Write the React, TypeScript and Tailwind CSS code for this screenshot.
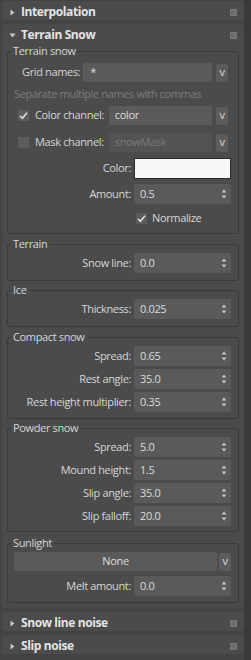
import React from 'react';

const Tri = ({ open }: { open?: boolean }) => (
  <svg width="7" height="7" viewBox="0 0 7 7" className="shrink-0">
    {open ? <path d="M0.5 1.5 L6.5 1.5 L3.5 5.5 Z" fill="#c8c8c8" /> : <path d="M1.5 0.5 L5.5 3.5 L1.5 6.5 Z" fill="#c8c8c8" />}
  </svg>
);

const PinBox = () => (
  <div className="w-[7px] h-[7px] bg-[#6c6c6c] border border-[#777777] shrink-0" />
);

function RolloutHeader({ title, open }: { title: string; open?: boolean }) {
  return (
    <div className="h-[20px] flex items-center pt-[2px] pl-[7px] pr-[7px]">
      <Tri open={open} />
      <span className="ml-[5px] text-[12px] font-bold tracking-[-0.4px] text-[#e4e4e4] leading-none">{title}</span>
      <div className="flex-1" />
      <PinBox />
    </div>
  );
}

const Spinner = () => (
  <svg width="6" height="10" viewBox="0 0 6 10" className="shrink-0">
    <path d="M3 0.5 L5.5 3.5 L0.5 3.5 Z" fill="#c4c4c4" />
    <path d="M0.5 6.5 L5.5 6.5 L3 9.5 Z" fill="#c4c4c4" />
  </svg>
);

function SpinRow({ label, value, className = '' }: { label: string; value: string; className?: string }) {
  return (
    <div className={`flex items-center h-[20px] ${className}`}>
      <span className="flex-1 text-right text-[#d6d6d6] whitespace-nowrap">{label}</span>
      <div className="ml-[3px] w-[97px] h-[20px] bg-[#5a5a5a] rounded-[2px] flex items-center pl-[6px] pr-[4px]">
        <span className="flex-1 text-[#dcdcdc]">{value}</span>
        <Spinner />
      </div>
    </div>
  );
}

const DropBtn = () => (
  <div className="w-[12px] h-[18px] bg-[#5c5c5c] rounded-[2px] flex items-center justify-center text-[#dcdcdc] shrink-0">
    v
  </div>
);

function CheckBox({ checked }: { checked?: boolean }) {
  return (
    <div className="w-[11px] h-[11px] bg-[#5c5c5c] flex items-center justify-center shrink-0">
      {checked && (
        <svg width="9" height="9" viewBox="0 0 9 9">
          <path d="M1 4.8 L3.4 7.2 L8 1.8" stroke="#e0e0e0" strokeWidth="1.6" fill="none" />
        </svg>
      )}
    </div>
  );
}

function Group({ title, children, className = '' }: { title: string; children: React.ReactNode; className?: string }) {
  return (
    <fieldset className={`mx-[5px] border border-[#393939] rounded-[3px] px-0 ${className}`}>
      <legend className="ml-[3px] px-[2px] h-[16px] leading-[16px] text-[#d6d6d6]">{title}</legend>
      {children}
    </fieldset>
  );
}

export default function App() {
  return (
    <div className="w-[251px] h-[660px] bg-[#434343] flex font-['Open_Sans',sans-serif] text-[11px] tracking-[-0.35px] overflow-hidden">
      <div className="w-[244px] pl-[2px] pt-[1px] flex flex-col">
        <div className="bg-[#4b4b4b] rounded-[3px] h-[19px] overflow-hidden">
          <RolloutHeader title="Interpolation" />
        </div>

        <div className="mt-[4px] bg-[#4b4b4b] rounded-[3px] pb-[5px]">
          <RolloutHeader title="Terrain Snow" open />

          <Group title="Terrain snow" className="-mt-[1px] pb-[8px]">
            <div className="mt-[4px] flex items-center h-[19px] pl-[14px] pr-[10px]">
              <span className="text-[#d6d6d6]">Grid names:</span>
              <div className="ml-[3px] flex-1 h-[19px] bg-[#5a5a5a] flex items-center pl-[7px] text-[#dcdcdc]">*</div>
              <div className="ml-[4px]"><DropBtn /></div>
            </div>
            <div className="mt-[4px] h-[16px] leading-[16px] pl-[6px] text-[#7c7c7c] whitespace-nowrap">
              Separate multiple names with commas
            </div>
            <div className="mt-[4px] flex items-center h-[19px] pl-[10px] pr-[10px]">
              <CheckBox checked />
              <span className="ml-[6px] text-[#d6d6d6] whitespace-nowrap">Color channel:</span>
              <div className="ml-[5px] flex-1 h-[19px] bg-[#5a5a5a] flex items-center pl-[6px] text-[#dcdcdc]">color</div>
              <div className="ml-[4px]"><DropBtn /></div>
            </div>
            <div className="mt-[8px] flex items-center h-[19px] pl-[10px] pr-[10px]">
              <CheckBox />
              <span className="ml-[6px] text-[#d6d6d6] whitespace-nowrap">Mask channel:</span>
              <div className="ml-[5px] flex-1 h-[19px] bg-[#535353] flex items-center pl-[6px] text-[#7a7a7a]">snowMask</div>
              <div className="ml-[4px]"><DropBtn /></div>
            </div>
            <div className="mt-[6px] flex items-center h-[21px] pr-[7px]">
              <span className="flex-1 text-right text-[#d6d6d6]">Color:</span>
              <div className="ml-[3px] w-[97px] h-[21px] bg-[#f7f8fa] border border-[#2a2a2a]" />
            </div>
            <SpinRow label="Amount:" value="0.5" className="mt-[5px] pr-[7px]" />
            <div className="mt-[7px] flex items-center h-[14px] pl-[128px]">
              <CheckBox checked />
              <span className="ml-[5px] text-[#d6d6d6]">Normalize</span>
            </div>
          </Group>

          <Group title="Terrain" className="mt-[2px] pb-[7px] pr-[7px]">
            <SpinRow label="Snow line:" value="0.0" className="mt-[1px]" />
          </Group>

          <Group title="Ice" className="mt-[1px] pb-[7px] pr-[7px]">
            <SpinRow label="Thickness:" value="0.025" className="mt-[1px]" />
          </Group>

          <Group title="Compact snow" className="mt-[2px] pb-[6px] pr-[7px]">
            <div className="mt-[1px] flex flex-col gap-[3px]">
              <SpinRow label="Spread:" value="0.65" />
              <SpinRow label="Rest angle:" value="35.0" />
              <SpinRow label="Rest height multiplier:" value="0.35" />
            </div>
          </Group>

          <Group title="Powder snow" className="mt-[1px] pb-[5px] pr-[7px]">
            <div className="mt-[1px] flex flex-col gap-[3px]">
              <SpinRow label="Spread:" value="5.0" />
              <SpinRow label="Mound height:" value="1.5" />
              <SpinRow label="Slip angle:" value="35.0" />
              <SpinRow label="Slip falloff:" value="20.0" />
            </div>
          </Group>

          <Group title="Sunlight" className="mt-[3px] pb-[6px] pr-[7px]">
            <div className="mt-[1px] flex items-center h-[19px] pl-[6px]">
              <div className="flex-1 h-[19px] bg-[#5a5a5a] rounded-[2px] flex items-center justify-center text-[#dcdcdc]">None</div>
              <div className="ml-[2px]"><DropBtn /></div>
            </div>
            <SpinRow label="Melt amount:" value="0.0" className="mt-[5px]" />
          </Group>
        </div>

        <div className="mt-[4px] bg-[#4b4b4b] rounded-[3px] h-[19px]">
          <RolloutHeader title="Snow line noise" />
        </div>
        <div className="mt-[4px] bg-[#4b4b4b] rounded-[3px] h-[19px]">
          <RolloutHeader title="Slip noise" />
        </div>
      </div>
      <div className="w-[7px] bg-[#3a3a3a]" />
    </div>
  );
}
